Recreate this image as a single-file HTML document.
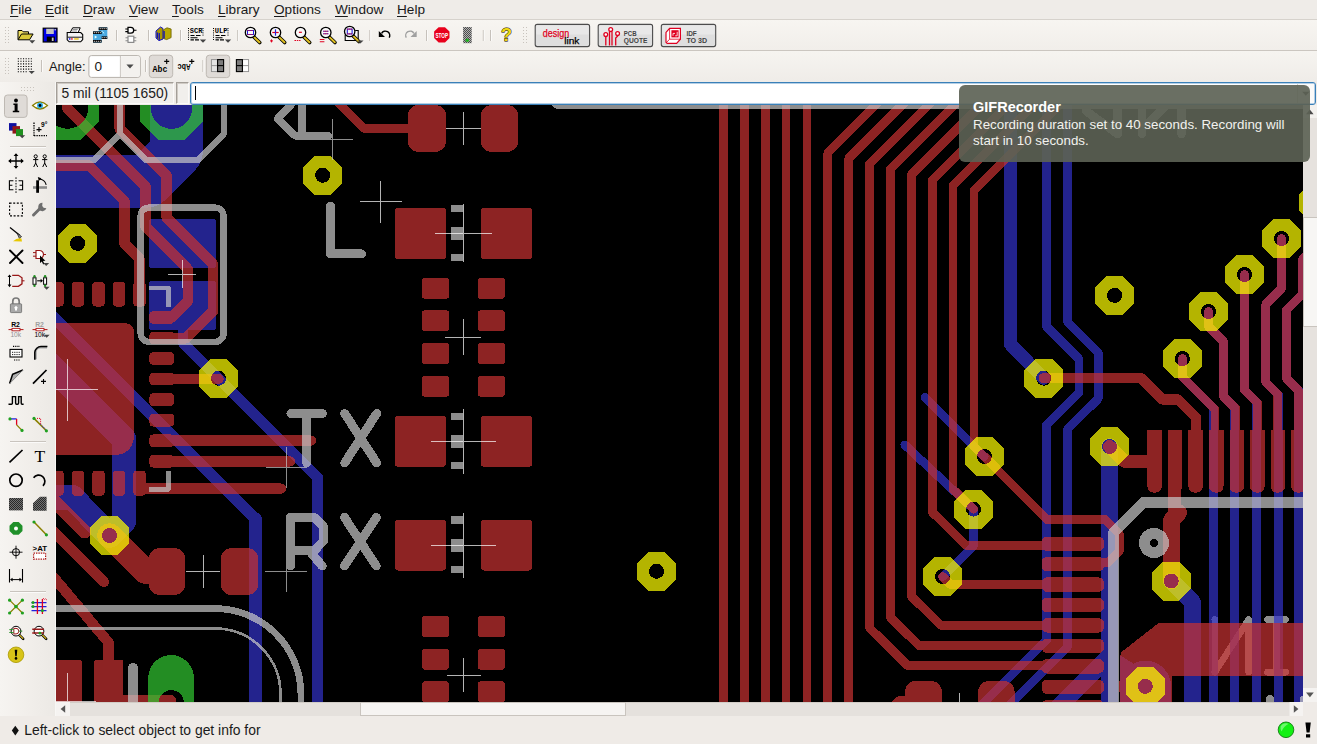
<!DOCTYPE html>
<html><head><meta charset="utf-8"><title>EAGLE</title>
<style>
*{box-sizing:border-box;margin:0;padding:0}
html,body{width:1317px;height:744px;overflow:hidden;background:#efebe7;font-family:"Liberation Sans",sans-serif;color:#1a1a1a}
#root{position:relative;width:1317px;height:744px;overflow:hidden;background:#efebe7}
.abs{position:absolute}
#menubar{left:0;top:0;width:1317px;height:20px;background:#efece8;border-bottom:1px solid #d6d2cc}
#menubar span{position:absolute;top:1px;font-size:13.6px;line-height:17px;white-space:nowrap;transform-origin:0 0}
#menubar u{text-decoration:underline;text-underline-offset:2px}
#tb1{left:0;top:20px;width:1317px;height:31px;background:linear-gradient(#f7f5f1,#f1eeea);border-bottom:1px solid #cbc6c0}
#tb2{left:0;top:51px;width:1317px;height:31px;background:linear-gradient(#f6f4f0,#efece8)}
#lefttb{left:0;top:82px;width:56px;height:634px;background:linear-gradient(90deg,#f6f4f1,#f1eeea 55%,#ece9e5);border-right:1px solid #f8f7f5}
#cvwrap{left:56px;top:105px;width:1247px;height:597px;background:#000;overflow:hidden}
#cvwrap svg{display:block}
#coord{left:56px;top:82px;width:118px;height:22px;border:1px solid #a39e98;border-right-color:#fbfaf9;border-bottom-color:#fbfaf9;box-shadow:inset 1px 1px 0 #cfcac4;background:#f1efec;font-size:13.85px;line-height:21px;padding-left:4.5px;white-space:nowrap}
#coord2{left:175.5px;top:82px;width:13.5px;height:22px;border:1px solid #a39e98;border-right-color:#fbfaf9;border-bottom-color:#fbfaf9;box-shadow:inset 1px 1px 0 #cfcac4;background:#f1efec}
#cmd{left:190px;top:82px;width:1126px;height:23px;border:1px solid #3a80b8;border-radius:3px;background:#fff;box-shadow:inset 0 0 0 1px #b4cfe6;z-index:3}
#cmdbtn{left:1297px;top:84px;width:17px;height:19px;border-left:1px solid #d8d4ce;background:#fbfaf9;z-index:3}
#caret{z-index:4}
#notif{z-index:5}
#caret{left:195px;top:86px;width:1px;height:14px;background:#000}
#vscroll{left:1303px;top:105px;width:14px;height:597px;background:#e6e2de}
#vthumb{left:1303px;top:217px;width:14px;height:110px;background:#f7f6f4;border:1px solid #c9c4be;border-right:none}
#hscroll{left:56px;top:702px;width:1247px;height:14px;background:#e5e1dd;border-top:1px solid #d2cdc7}
#hthumb{left:360px;top:702px;width:266px;height:14px;background:#f6f4f2;border:1px solid #c9c4be}
#hleft{left:56px;top:702px;width:14px;height:14px;background:#f3f1ee}
#status{left:0;top:716px;width:1317px;height:28px;background:#efebe7}
#status .t{position:absolute;left:24.3px;top:6px;font-size:13.9px;line-height:16px;white-space:nowrap;transform-origin:0 0}
#notif{left:959px;top:85px;width:351px;height:77px;border-radius:6px;background:rgba(92,97,84,0.915)}
#notif .h{position:absolute;left:14px;top:14px;font-weight:bold;color:#fff;font-size:14.5px;line-height:16px;white-space:nowrap;transform-origin:0 0}
#notif .b{position:absolute;left:14px;color:#f2f2ee;font-size:13.35px;line-height:16px;white-space:nowrap;transform-origin:0 0}
.sep{position:absolute;width:1px;background:#c9c4be;border-right:1px solid #fff;box-sizing:content-box}
.grip{position:absolute;width:3px;background-image:radial-gradient(circle,#c4bfb9 0.7px,transparent 0.9px);background-size:3px 3px}
.pressed{position:absolute;border:1px solid #b3aea8;border-radius:3px;background:#dcd8d3}
</style></head><body><div id="root">
<div id="menubar" class="abs">
<span style="left:10px"><u>F</u>ile</span><span style="left:45px"><u>E</u>dit</span><span style="left:83px"><u>D</u>raw</span><span style="left:129px"><u>V</u>iew</span><span style="left:172px"><u>T</u>ools</span><span style="left:218px"><u>L</u>ibrary</span><span style="left:274px"><u>O</u>ptions</span><span style="left:335px"><u>W</u>indow</span><span style="left:397px"><u>H</u>elp</span>
</div>
<div id="tb1" class="abs"></div>
<div id="tb2" class="abs"><!--TB2--></div>
<div id="lefttb" class="abs"><!--LEFT--></div>
<svg class="abs" style="left:0;top:0" width="1317" height="82" viewBox="0 0 1317 82"><defs><pattern id="chk" width="2" height="2" patternUnits="userSpaceOnUse"><rect width="2" height="2" fill="#fff"/><rect width="1" height="1" fill="#000"/><rect x="1" y="1" width="1" height="1" fill="#000"/></pattern><pattern id="chk2" width="2" height="2" patternUnits="userSpaceOnUse"><rect width="2" height="2" fill="#8a8a8a"/><rect width="1" height="1" fill="#111"/><rect x="1" y="1" width="1" height="1" fill="#111"/></pattern></defs><path d="M5.5,27v17M8.5,27v17" stroke="#c8c3bd" stroke-width="1" stroke-dasharray="1,2"/><g transform="translate(25.5,35)"><path d="M-7.5,4.5V-4.5h4l1.2,1.3h5.3V-1" fill="#f0e060" stroke="#000" stroke-width="1"/><path d="M-7.5,4.8L-4,-1H7.6L4,4.8Z" fill="#d8c838" stroke="#000" stroke-width="1"/><path d="M3.6,5.3h6.2l-3.1,3.2z" fill="#444"/></g><g transform="translate(50,35)"><rect x="-6.8" y="-6.8" width="13.8" height="13.8" fill="#0000e8" stroke="#000" stroke-width="1.2"/><rect x="-3.8" y="-6.2" width="7.6" height="5.2" fill="#c4c4c4"/><rect x="-3.2" y="1.6" width="8" height="5" fill="#000"/><rect x="1.8" y="2.6" width="1.8" height="3.4" fill="#c4c4c4"/><rect x="4.5" y="-6" width="1.4" height="1.4" fill="#c4c4c4"/></g><g transform="translate(74.7,35)"><path d="M-4.5,-2.5L-2,-7.2H5.5L3.5,-2.5Z" fill="#fff" stroke="#000" stroke-width="1"/><path d="M-7.5,-2.5H6L8,-0.5V4.5L6,6.8H-5.5L-7.5,4.8Z" fill="#f4f4f4" stroke="#000" stroke-width="1.1"/><path d="M-7,2.2H7.5" stroke="#000" stroke-width="0.9"/><rect x="-5.8" y="3.3" width="1.6" height="1.3" fill="#00f"/><rect x="-3.6" y="3.3" width="1.6" height="1.3" fill="#e00"/><rect x="-0.5" y="3.3" width="4.5" height="1.3" fill="#e8c000"/><path d="M-2,-5.5h5M-2.8,-4h5" stroke="#666" stroke-width="0.7"/></g><g transform="translate(100.2,35)"><rect x="-1.5" y="-7.6" width="8.6" height="11" fill="#48a8e0"/><rect x="-1.5" y="-7.6" width="8.6" height="2.6" fill="#000"/><rect x="-1.5" y="1.4" width="8.6" height="2.6" fill="#000"/><path d="M-0.5,-6.3h7M-0.5,2.7h7" stroke="#fff" stroke-width="1" stroke-dasharray="1,1"/><rect x="-7.2" y="-3.6" width="8.6" height="11.2" fill="#48a8e0"/><rect x="-7.2" y="-3.6" width="8.6" height="2.6" fill="#000"/><rect x="-7.2" y="5" width="8.6" height="2.6" fill="#000"/><path d="M-6.4,-2.3h7M-6.4,6.3h7" stroke="#fff" stroke-width="1" stroke-dasharray="1,1"/><path d="M-5.5,0.5l2.5,1.6l-2.5,1.6z" fill="#dff"/><path d="M1.5,-4l3,3" stroke="#dff" stroke-width="1.2" stroke-dasharray="1,1"/></g><path d="M116.5,30v11" stroke="#c6c1bb" stroke-width="1"/><path d="M117.5,30v11" stroke="#fbfaf9" stroke-width="1"/><g transform="translate(130.8,35)"><path d="M-2.8,-7.6H0A2.9,2.9 0 0 1 0,-1.8H-2.8Z" fill="#fff" stroke="#000" stroke-width="1.3"/><path d="M-5.5,-6h2.7M-5.5,-3.4h2.7M2.9,-4.7h2.8" stroke="#000" stroke-width="1.1"/><rect x="-2.8" y="1.2" width="5.8" height="6.2" fill="#fff" stroke="#8a8a8a" stroke-width="1.2"/><path d="M-5.3,2.8h2.5M-5.3,5.8h2.5M3,2.8h2.5M3,5.8h2.5" stroke="#8a8a8a" stroke-width="1.1"/></g><path d="M148.5,30v11" stroke="#c6c1bb" stroke-width="1"/><path d="M149.5,30v11" stroke="#fbfaf9" stroke-width="1"/><g transform="translate(163.5,34)"><path d="M-7.5,-3L-3,-7L-0.5,-5.5V5L-4.5,6.6L-7.5,4Z" fill="#a89800" stroke="#1010c0" stroke-width="1"/><path d="M-6,-1.5V4.5M-4.2,-1V5.8" stroke="#1010c0" stroke-width="1.2"/><path d="M0,-4.2L3.5,-6.2L7.6,-5V3.6L3.2,5.6L0,4.6Z" fill="#b8a800" stroke="#6a6000" stroke-width="0.8"/><path d="M0.6,-3V4.6" stroke="#1010c0" stroke-width="1.3"/></g><path d="M180.5,30v11" stroke="#c6c1bb" stroke-width="1"/><path d="M181.5,30v11" stroke="#fbfaf9" stroke-width="1"/><g transform="translate(196,34.5)"><path d="M-7.5,-6.5V6M7,-6.5V2" stroke="#000" stroke-width="1" stroke-dasharray="1,1.2"/><text x="-6.2" y="-1.4" font-family="Liberation Mono" font-weight="bold" font-size="7.4" textLength="12.6" lengthAdjust="spacingAndGlyphs" fill="#000">SCR</text><path d="M-5.5,1h4M0,1h4.5M-5.5,3.2h7M-5.5,5.4h3.4M-1,5.4h4" stroke="#000" stroke-width="1.1"/><path d="M3.8,4.9h6.4l-3.2,3.3z" fill="#444"/></g><g transform="translate(221,34.5)"><path d="M-7.5,-6.5V6M7,-6.5V2" stroke="#000" stroke-width="1" stroke-dasharray="1,1.2"/><text x="-6.2" y="-1.4" font-family="Liberation Mono" font-weight="bold" font-size="7.4" textLength="12.6" lengthAdjust="spacingAndGlyphs" fill="#000">ULP</text><path d="M-5.5,1h4M0,1h4.5M-5.5,3.2h7M-5.5,5.4h3.4M-1,5.4h4" stroke="#000" stroke-width="1.1"/><path d="M3.8,4.9h6.4l-3.2,3.3z" fill="#444"/></g><path d="M237.7,30v11" stroke="#c6c1bb" stroke-width="1"/><path d="M238.7,30v11" stroke="#fbfaf9" stroke-width="1"/><g transform="translate(250.5,33.5)"><path d="M3.2,3.2L9.2,9" stroke="#000" stroke-width="3.6" stroke-linecap="round"/><path d="M3.6,3.6L9,8.8" stroke="#e0c020" stroke-width="2" stroke-linecap="round"/><circle cx="0" cy="-1" r="5.2" fill="#f8f8f8" stroke="#000" stroke-width="1.3"/><rect x="-3" y="-3" width="6" height="4" fill="none" stroke="#2020e0" stroke-width="1"/><path d="M-3,-3h6M-3,1h6" stroke="#e00020" stroke-width="1" stroke-dasharray="1,1"/></g><g transform="translate(275.5,33.5)"><path d="M3.2,3.2L9.2,9" stroke="#000" stroke-width="3.6" stroke-linecap="round"/><path d="M3.6,3.6L9,8.8" stroke="#e0c020" stroke-width="2" stroke-linecap="round"/><circle cx="0" cy="-1" r="5.2" fill="#f8f8f8" stroke="#000" stroke-width="1.3"/><path d="M-3.2,-1h6.4" stroke="#e00020" stroke-width="1.2"/><path d="M0,-4.2v6.4" stroke="#2020e0" stroke-width="1.2"/><path d="M-5.5,7.4h3M-4,5.9v3" stroke="#e00020" stroke-width="1"/></g><g transform="translate(300.5,33.5)"><path d="M3.2,3.2L9.2,9" stroke="#000" stroke-width="3.6" stroke-linecap="round"/><path d="M3.6,3.6L9,8.8" stroke="#e0c020" stroke-width="2" stroke-linecap="round"/><circle cx="0" cy="-1" r="5.2" fill="#f8f8f8" stroke="#000" stroke-width="1.3"/><path d="M-1.6,-1.2h3" stroke="#e00020" stroke-width="1.2"/><path d="M-6,7h6" stroke="#e00020" stroke-width="1.1" stroke-dasharray="1.5,0.8"/></g><g transform="translate(325.8,33.5)"><path d="M3.2,3.2L9.2,9" stroke="#000" stroke-width="3.6" stroke-linecap="round"/><path d="M3.6,3.6L9,8.8" stroke="#e0c020" stroke-width="2" stroke-linecap="round"/><circle cx="0" cy="-1" r="5.2" fill="#f8f8f8" stroke="#000" stroke-width="1.3"/><path d="M-2.5,-2.3h5M-2.5,0.2h5" stroke="#e00020" stroke-width="1.1"/><path d="M-2.5,-2.3h5M-2.5,0.2h5" stroke="#2020e0" stroke-width="1.1" stroke-dasharray="1,1"/><path d="M-6,6h4.6M-6,8.2h4.6" stroke="#e00020" stroke-width="1.1"/></g><g transform="translate(350.7,33.5)"><path d="M-5.5,1.5V7H7.5V-3H4.5" fill="#f8f8f8" stroke="#000" stroke-width="1.1"/></g><g transform="translate(349.7,32.5)"><path d="M3.2,3.2L9.2,9" stroke="#000" stroke-width="3.6" stroke-linecap="round"/><path d="M3.6,3.6L9,8.8" stroke="#e0c020" stroke-width="2" stroke-linecap="round"/><circle cx="0" cy="-1" r="5.2" fill="#f8f8f8" stroke="#000" stroke-width="1.3"/><rect x="-2.4" y="-3.4" width="4.8" height="4.8" fill="none" stroke="#2020e0" stroke-width="1.1"/><path d="M-2.4,-3.4h4.8M-2.4,1.4h4.8" stroke="#e00020" stroke-width="1.1" stroke-dasharray="1,1"/><path d="M7.6,7.9h6.2l-3.1,3.2z" fill="#444"/></g><path d="M369.8,30v11" stroke="#c6c1bb" stroke-width="1"/><path d="M370.8,30v11" stroke="#fbfaf9" stroke-width="1"/><g transform="translate(385,34.5)"><path d="M4.2,3.2A4.3,4.3 0 1 0 -3.4,-1.2" fill="none" stroke="#000" stroke-width="1.4"/><path d="M-6.2,-3.6V2.6H0Z" fill="#000"/></g><g transform="translate(410.5,34.5)"><path d="M-4.2,3.2A4.3,4.3 0 1 1 3.4,-1.2" fill="none" stroke="#a0a0a0" stroke-width="1.4"/><path d="M6.2,-3.6V2.6H0Z" fill="#a0a0a0"/></g><path d="M426.5,30v11" stroke="#c6c1bb" stroke-width="1"/><path d="M427.5,30v11" stroke="#fbfaf9" stroke-width="1"/><g transform="translate(441.8,34.8)"><polygon points="7.67,3.18 3.18,7.67 -3.18,7.67 -7.67,3.18 -7.67,-3.18 -3.18,-7.67 3.18,-7.67 7.67,-3.18" fill="#e8001c"/><text x="-6.4" y="2.7" font-family="Liberation Sans" font-weight="bold" font-size="7.6" textLength="12.8" lengthAdjust="spacingAndGlyphs" fill="#fff">STOP</text></g><g transform="translate(467.3,35)"><rect x="-4.2" y="-8" width="8.6" height="16.2" fill="url(#chk)"/><circle cx="0" cy="5.2" r="1.8" fill="#20b020"/></g><path d="M483.3,30v11" stroke="#c6c1bb" stroke-width="1"/><path d="M484.3,30v11" stroke="#fbfaf9" stroke-width="1"/><path d="M490.5,30v11" stroke="#c6c1bb" stroke-width="1"/><path d="M491.5,30v11" stroke="#fbfaf9" stroke-width="1"/><g transform="translate(506,35)"><text x="-5" y="6.4" font-family="Liberation Sans" font-weight="bold" font-size="18" fill="#f0d810" stroke="#000" stroke-width="0.9" paint-order="stroke">?</text></g><path d="M523.5,27v17M526.5,27v17" stroke="#c8c3bd" stroke-width="1" stroke-dasharray="1,2"/><rect x="535.2" y="24.4" width="54.4" height="22.2" rx="2" fill="#dedede" stroke="#4c4c4c" stroke-width="1.1"/><rect x="536.2" y="25.4" width="52.4" height="9" rx="1" fill="#e8e8e8"/><rect x="598.2" y="24.4" width="54.4" height="22.2" rx="2" fill="#dedede" stroke="#4c4c4c" stroke-width="1.1"/><rect x="599.2" y="25.4" width="52.4" height="9" rx="1" fill="#e8e8e8"/><rect x="661.3" y="24.4" width="54.4" height="22.2" rx="2" fill="#dedede" stroke="#4c4c4c" stroke-width="1.1"/><rect x="662.3" y="25.4" width="52.4" height="9" rx="1" fill="#e8e8e8"/><text x="542.8" y="37.2" font-family="Liberation Sans" font-size="10.5" textLength="26.4" lengthAdjust="spacingAndGlyphs" fill="#e00020" stroke="#e00020" stroke-width="0.25">design</text><text x="564.2" y="44.2" font-family="Liberation Sans" font-size="9.6" textLength="15.2" lengthAdjust="spacingAndGlyphs" fill="#000" stroke="#000" stroke-width="0.25">link</text><g stroke="#e00020" stroke-width="1.3" fill="#fff"><path d="M605.8,45.5V36.5M609.5,45.5V31.5M612,45.5V31.5M615.7,45.5V38L617.5,36.2V35.5" fill="none"/><circle cx="605.8" cy="34.6" r="1.9"/><circle cx="610.7" cy="29.6" r="1.9"/><circle cx="617.6" cy="33.6" r="1.9"/></g><text x="623.8" y="36.2" font-family="Liberation Sans" font-weight="bold" font-size="6.6" textLength="12.8" lengthAdjust="spacingAndGlyphs" fill="#444">PCB</text><text x="623.8" y="43" font-family="Liberation Sans" font-weight="bold" font-size="6.6" textLength="23.6" lengthAdjust="spacingAndGlyphs" fill="#444">QUOTE</text><g stroke="#e00020" stroke-width="1.2" fill="none"><path d="M666,42.2V32.4L669.6,28.4H680.4V39.2L676.6,43.4H667.2Z" fill="#fff"/><path d="M669.6,28.4V39.2H680.4M669.6,39.2L666.4,42.6" stroke-width="0.8"/><rect x="671.4" y="30.2" width="7.2" height="7.2" fill="#e00020" stroke="none"/><path d="M673,35.8v-2.4h2M675.2,35.8h2v-4" stroke="#fff" stroke-width="0.8"/></g><text x="686.4" y="36.2" font-family="Liberation Sans" font-weight="bold" font-size="6.6" textLength="10.4" lengthAdjust="spacingAndGlyphs" fill="#444">IDF</text><text x="686.4" y="43" font-family="Liberation Sans" font-weight="bold" font-size="6.6" textLength="20.8" lengthAdjust="spacingAndGlyphs" fill="#444">TO 3D</text><path d="M5.5,58v17M8.5,58v17" stroke="#c8c3bd" stroke-width="1" stroke-dasharray="1,2"/><g transform="translate(25,65.5)"><path d="M-7.2,-6.8h14M-7.2,-4.2h14M-7.2,-1.6h14M-7.2,1h14M-7.2,3.6h14M-7.2,6.2h9" stroke="#000" stroke-width="1.1" stroke-dasharray="1.1,1.5"/><path d="M3.6,5.4h6.2l-3.1,3.2z" fill="#444"/></g><path d="M41.5,60v12" stroke="#c6c1bb" stroke-width="1"/><path d="M42.5,60v12" stroke="#fbfaf9" stroke-width="1"/><text x="49" y="71.4" font-family="Liberation Sans" font-size="13.6" textLength="36.6" lengthAdjust="spacingAndGlyphs" fill="#1a1a1a">Angle:</text><rect x="88.9" y="55.6" width="51.4" height="21.8" rx="2.5" fill="#fff" stroke="#b6b1ab" stroke-width="1"/><path d="M120.4,56v21" stroke="#c8c3bd" stroke-width="1"/><rect x="120.9" y="56.2" width="18.9" height="20.6" rx="2" fill="#f3f1ee"/><text x="94.5" y="71.4" font-family="Liberation Sans" font-size="13.6" fill="#1a1a1a">0</text><path d="M126.4,64.4h7.2l-3.6,4z" fill="#4a4a4a"/><path d="M145.5,60v12" stroke="#c6c1bb" stroke-width="1"/><path d="M146.5,60v12" stroke="#fbfaf9" stroke-width="1"/><rect x="149.3" y="55.2" width="23.4" height="22.4" rx="3" fill="#dfdbd7" stroke="#beb9b3" stroke-width="1"/><text x="152.6" y="72" font-family="Liberation Mono" font-weight="bold" font-size="9.6" textLength="14.8" lengthAdjust="spacingAndGlyphs" fill="#000">Abc</text><path d="M164.2,61.4h5M166.7,58.9v5" stroke="#000" stroke-width="1.1"/><text transform="translate(190.4,63.6) rotate(180)" font-family="Liberation Mono" font-weight="bold" font-size="9.6" textLength="13" lengthAdjust="spacingAndGlyphs" fill="#000">Abc</text><path d="M189.3,61.4h5M191.8,58.9v5" stroke="#000" stroke-width="1.1"/><path d="M202.9,60v12" stroke="#c6c1bb" stroke-width="1"/><path d="M203.9,60v12" stroke="#fbfaf9" stroke-width="1"/><rect x="206.3" y="55.2" width="23.4" height="22.4" rx="3" fill="#dfdbd7" stroke="#beb9b3" stroke-width="1"/><g><rect x="211.4" y="59.6" width="6" height="12" fill="#e4e4e4" stroke="#8c8c8c" stroke-width="0.9"/><path d="M211.4,65.6h6" stroke="#8c8c8c" stroke-width="0.9"/><rect x="217.6" y="59.6" width="6" height="12" fill="#7c7c7c" stroke="#000" stroke-width="1.1"/><path d="M217.6,65.6h6" stroke="#000" stroke-width="1.1"/></g><g><rect x="242.6" y="59.6" width="6" height="12" fill="#fff" stroke="#8c8c8c" stroke-width="0.9"/><path d="M242.6,65.6h6" stroke="#8c8c8c" stroke-width="0.9"/><rect x="236.4" y="59.6" width="6" height="12" fill="#7c7c7c" stroke="#000" stroke-width="1.1"/><path d="M236.4,65.6h6" stroke="#000" stroke-width="1.1"/></g></svg><svg class="abs" style="left:0;top:0" width="56" height="744" viewBox="0 0 56 744"><path d="M21,87.5h15M21,90.5h15" stroke="#c8c3bd" stroke-width="1" stroke-dasharray="1,2"/><rect x="4.5" y="95" width="22.6" height="22.4" rx="3" fill="#dfdbd7" stroke="#beb9b3"/><g transform="translate(16,105.5)"><circle cx="0" cy="-5" r="1.9" fill="#000"/><path d="M-2.6,-2h4.2v7.2h1.6v1.6h-6.4v-1.6h1.8v-5.6h-1.2z" fill="#000"/></g><g transform="translate(40,105.5)"><path d="M-7.5,0Q0,-7 7.5,0Q0,7 -7.5,0Z" fill="#fff" stroke="#8a8000" stroke-width="1.2"/><circle r="3" fill="#30b0e8"/><circle r="1.4" fill="#000"/></g><g transform="translate(16,129.6)"><rect x="-7" y="-6.5" width="7.5" height="7.5" fill="#1010a0"/><rect x="-3.5" y="-3.5" width="7.5" height="7.5" fill="#901818"/><rect x="0" y="-0.5" width="7" height="7" fill="#209020"/><path d="M3.2,5.6h6l-3,3.1z" fill="#444"/></g><g transform="translate(40,129.6)"><path d="M-6,-7V6.5M-6,6h13" stroke="#000" stroke-width="1.3" stroke-dasharray="1.4,1"/><path d="M-3.5,0h5M-1,-2.5v5" stroke="#000" stroke-width="1.1"/><text x="1" y="-2.2" font-family="Liberation Sans" font-weight="bold" font-size="6.6" fill="#000">9°</text></g><path d="M10,146.5h36" stroke="#c9c4be"/><path d="M10,147.5h36" stroke="#fbfaf9"/><g transform="translate(16,161)"><g transform="scale(0.92)"><path d="M0,-7.5V7.5M-7.5,0H7.5" stroke="#000" stroke-width="1.4"/><path d="M0,-8.5l-2.6,3.2h5.2zM0,8.5l-2.6,-3.2h5.2zM-8.5,0l3.2,-2.6v5.2zM8.5,0l-3.2,-2.6v5.2z" fill="#000"/></g></g><g transform="translate(35.7,161)"><circle cx="0" cy="-4.6" r="1.6" fill="none" stroke="#000" stroke-width="1"/><path d="M0,-3V2M-2.6,-1.4h5.2M0,2L-2,6M0,2L2,6" stroke="#000" stroke-width="1" fill="none"/></g><g transform="translate(44.7,161)"><circle cx="0" cy="-4.6" r="1.6" fill="none" stroke="#000" stroke-width="1"/><path d="M0,-3V2M-2.6,-1.4h5.2M0,2L-2,6M0,2L2,6" stroke="#000" stroke-width="1" fill="none"/></g><g transform="translate(16,185.3)"><path d="M0,-8V8" stroke="#000" stroke-width="1" stroke-dasharray="1.6,1.2"/><path d="M-2.6,-4.5H-6.6V4.5H-2.6M-6.6,0H-3.6M2.6,-4.5H6.6V4.5H2.6M6.6,0H3.6" stroke="#000" stroke-width="1.1" fill="none"/></g><g transform="translate(40,185.3)"><path d="M-7,2.2H7" stroke="#8a8a8a" stroke-width="2.6"/><path d="M-2.4,-5V7.5" stroke="#000" stroke-width="2.8"/><path d="M-1,-6.2A7,7 0 0 1 6.2,-0.5" fill="none" stroke="#000" stroke-width="1.1"/><path d="M-2.2,-8.2l3.6,1.2l-2.6,2.6z" fill="#000"/></g><g transform="translate(16,209.5)"><rect x="-6.4" y="-6.4" width="12.8" height="12.8" fill="none" stroke="#000" stroke-width="1.1" stroke-dasharray="2,1.6"/></g><g transform="translate(40,209.5)"><path d="M-6.5,5.5L1,-2" stroke="#6e6e6e" stroke-width="3" stroke-linecap="round"/><path d="M2.5,-6.8A4.2,4.2 0 1 0 6.4,-1.2L3.6,-1.8L2.2,-3.6Z" fill="#6e6e6e"/></g><g transform="translate(16,235)"><path d="M-6,-7.5L4,0.5" stroke="#000" stroke-width="1.3"/><path d="M1,-2L5.6,1.6L3.4,3.6Z" fill="#888" stroke="#000" stroke-width="0.6"/><path d="M-3,6.2Q1,2.6 5.4,3.4L6,6.4Z" fill="#e8c800"/></g><g transform="translate(16,257)"><path d="M-6,-6.5L6.5,6M6.5,-6.5L-6,6" stroke="#000" stroke-width="1.9" stroke-linecap="round"/></g><g transform="translate(40,257)"><path d="M-4,-6.5H-0.5A4,4 0 0 1 -0.5,1.5H-4Z" fill="#fff" stroke="#981818" stroke-width="1.2"/><path d="M-7,-4.4h3M-7,-0.8h3M3.4,-2.5h2.6" stroke="#981818" stroke-width="1"/><path d="M0,-1.5V6L1.8,4.4L3.2,7.4L4.4,6.8L3,4L5.4,3.8Z" fill="#000"/><path d="M3.2,6h6l-3,3z" fill="#444"/></g><g transform="translate(16,280.8)"><path d="M-6.5,-4.5V4.5" stroke="#000" stroke-width="1"/><path d="M-6.5,-6.4l-1.9,2.6h3.8zM-6.5,6.4l-1.9,-2.6h3.8z" fill="#000"/><path d="M-3.8,-5.5H2.4L6,-3V3L2.4,5.5H-3.8" fill="none" stroke="#981818" stroke-width="1.3"/><path d="M6,0h2.5" stroke="#981818" stroke-width="1.1"/></g><g transform="translate(40,280.8)"><rect x="-7" y="-3" width="3" height="6.5" fill="#fff" stroke="#000" stroke-width="1"/><rect x="3.6" y="-3" width="3" height="6.5" fill="#fff" stroke="#000" stroke-width="1"/><circle cx="-5.5" cy="-4.6" r="1.2" fill="#209020"/><circle cx="5.1" cy="-4.6" r="1.2" fill="#209020"/><circle cx="-5.5" cy="5" r="1.2" fill="#209020"/><circle cx="5.1" cy="5" r="1.2" fill="#209020"/><path d="M-2.8,0h4.4" stroke="#000" stroke-width="1.1"/><path d="M3,0l-2.4,-2v4z" fill="#000"/><path d="M3.6,6h6l-3,3z" fill="#444"/></g><g transform="translate(16,305.4)"><path d="M-3.2,-1.5V-4.2A3.2,3.2 0 0 1 3.2,-4.2V-1.5" fill="none" stroke="#7a7a7a" stroke-width="1.7"/><rect x="-5.6" y="-1.6" width="11.2" height="8.8" rx="0.8" fill="#a8a8a8" stroke="#6a6a6a" stroke-width="0.8"/><path d="M0,0.4l-2.2,2.4h1.2v2.4h2v-2.4h1.2z" fill="#fff"/></g><g transform="translate(16,329)"><text x="-4.8" y="-1.6" font-family="Liberation Sans" font-weight="bold" font-size="6.8" fill="#000">R2</text><path d="M-7.5,0.6h15" stroke="#b01818" stroke-width="1"/><rect x="-4" y="-0.6" width="8" height="2.4" fill="#fff" stroke="#b01818" stroke-width="0.9"/><text x="-5.6" y="7.6" font-family="Liberation Sans" font-size="6.6" fill="#909090">10k</text></g><g transform="translate(40,329)"><text x="-4.8" y="-1.6" font-family="Liberation Sans" font-weight="bold" font-size="6.8" fill="#a0a0a0">R2</text><path d="M-7.5,0.6h15" stroke="#b01818" stroke-width="1"/><rect x="-4" y="-0.6" width="8" height="2.4" fill="#fff" stroke="#b01818" stroke-width="0.9"/><text x="-5.6" y="7.6" font-family="Liberation Sans" font-size="6.6" fill="#000">10k</text></g><path d="M43.6,334.8h6l-3,3z" fill="#444"/><g transform="translate(16,352.8)"><rect x="-6" y="-3.4" width="12" height="7.6" fill="#fff" stroke="#000" stroke-width="1.1"/><path d="M-4,-0.5h8M-4,1.8h8" stroke="#000" stroke-width="0.9" stroke-dasharray="1,0.8"/><path d="M-3,-6.4h7M-2,7.2h6" stroke="#000" stroke-width="1.1" stroke-dasharray="1.2,1"/></g><g transform="translate(40,352.8)"><path d="M-5.5,6.5V-1A5.5,5.5 0 0 1 0,-6.4H7V-4.4H0.5A3.6,3.6 0 0 0 -3.2,-0.8V6.5Z" fill="#a8a8a8"/><path d="M-5.2,7V-0.6A6.2,6.2 0 0 1 1,-6.2H7.4" fill="none" stroke="#000" stroke-width="1.5"/></g><g transform="translate(16,376.8)"><path d="M-6.4,6.4L-3,-3L6.8,-6.8" fill="#b0b0b0" stroke="none"/><path d="M-6.4,6.8L-3.4,-2.6L7,-6.8" fill="none" stroke="#000" stroke-width="1.5"/><path d="M-6.4,6.8L7,-6.8" stroke="#808080" stroke-width="0.9"/></g><g transform="translate(40,376.8)"><path d="M-7,6.8L6.5,-6.8" stroke="#000" stroke-width="1.7"/><path d="M1,4.6h5M3.5,2.1v5" stroke="#000" stroke-width="1.1"/></g><g transform="translate(16,401)"><path d="M-7.5,3.2H-4.6Q-3.6,3.2 -3.6,2V-4.4H-0.4V2Q-0.4,3.2 0.6,3.2H1.4Q2.6,3.2 2.6,2V-4.4H5.2V2Q5.2,3.2 6.2,3.2H7.6" fill="none" stroke="#000" stroke-width="1.4"/></g><g transform="translate(16,424.4)"><path d="M-6,-5.5H0.6" stroke="#2020e0" stroke-width="1.3"/><path d="M0.6,-5.5V0.5" stroke="#e00020" stroke-width="1.3"/><path d="M0.6,0.5L6,6" stroke="#8a8000" stroke-width="1.3"/><circle cx="-6" cy="-5.5" r="1.6" fill="#20a020"/><circle cx="6" cy="6" r="1.6" fill="#20a020"/></g><g transform="translate(40,424.4)"><path d="M-6,-6L6.4,6.4" stroke="#8a8000" stroke-width="1.6"/><path d="M-3,-6h3.6v6" fill="none" stroke="#e00020" stroke-width="1" stroke-dasharray="1,1"/><path d="M0.6,0L5.6,5" stroke="#2020e0" stroke-width="1" stroke-dasharray="1,1"/><circle cx="-6" cy="-6" r="1.6" fill="#20a020"/><circle cx="6.4" cy="6.4" r="1.6" fill="#20a020"/></g><path d="M10,441.5h36" stroke="#c9c4be"/><path d="M10,442.5h36" stroke="#fbfaf9"/><g transform="translate(16,456.2)"><path d="M-6.5,6.2L6.5,-6.2" stroke="#000" stroke-width="1.7"/></g><g transform="translate(40,456.2)"><text x="-5.6" y="6.2" font-family="Liberation Serif" font-size="17.5" fill="#000">T</text></g><g transform="translate(16,480.2)"><circle r="6.2" fill="none" stroke="#000" stroke-width="1.7"/></g><g transform="translate(40,480.2)"><path d="M-6.4,-2.4A6.2,6.2 0 1 1 3,5.6" fill="none" stroke="#000" stroke-width="1.7"/></g><g transform="translate(16,504.2)"><rect x="-7" y="-6.2" width="14" height="12.4" fill="url(#chk2)"/></g><g transform="translate(40,504.2)"><path d="M-7,6.6V-1L0,-7.4H6.6V6.6Z" fill="url(#chk2)"/></g><g transform="translate(16,528.4)"><polygon points="6.47,2.68 2.68,6.47 -2.68,6.47 -6.47,2.68 -6.47,-2.68 -2.68,-6.47 2.68,-6.47 6.47,-2.68" fill="#20902a"/><circle r="2" fill="#fff"/></g><g transform="translate(40,528.4)"><path d="M-6,-6.4L6.4,6.4" stroke="#8a8000" stroke-width="1.5"/><circle cx="-6" cy="-6.4" r="1.6" fill="#20a020"/><circle cx="6.4" cy="6.4" r="1.6" fill="#20a020"/></g><g transform="translate(16,552.2)"><circle r="3.6" fill="none" stroke="#000" stroke-width="1"/><path d="M-6.5,0h13M0,-6.5v13" stroke="#000" stroke-width="0.9"/></g><g transform="translate(40,552.2)"><text x="-7.4" y="-1" font-family="Liberation Sans" font-weight="bold" font-size="7" textLength="14.4" lengthAdjust="spacingAndGlyphs" fill="#000">&gt;AT</text><rect x="-6.4" y="1" width="12" height="6" fill="#fff" stroke="#b01818" stroke-width="1.2" stroke-dasharray="1.4,1"/></g><g transform="translate(16,576)"><path d="M-6.5,-7V6.5M6.5,-7V6.5" stroke="#000" stroke-width="1.1"/><path d="M-5,3.6H5" stroke="#000" stroke-width="1"/><path d="M-6,3.6l2.6,-1.8v3.6zM6,3.6l-2.6,-1.8v3.6z" fill="#000"/></g><path d="M10,591.5h36" stroke="#c9c4be"/><path d="M10,592.5h36" stroke="#fbfaf9"/><g transform="translate(16,606.6)"><path d="M-6.4,-6.4L6.4,6.4M6.4,-6.4L-6.4,6.4" stroke="#8a8000" stroke-width="1.2"/><circle cx="-6.4" cy="-6.4" r="1.6" fill="#20a020"/><circle cx="6.4" cy="-6.4" r="1.6" fill="#20a020"/><circle cx="-6.4" cy="6.4" r="1.6" fill="#20a020"/><circle cx="6.4" cy="6.4" r="1.6" fill="#20a020"/><circle r="1.8" fill="#20a020"/></g><g transform="translate(39,606.6)"><path d="M-7.5,-4h15M-7.5,0h15M-7.5,4h15" stroke="#2020e0" stroke-width="1.3"/><path d="M-1.6,-7.5v15M3.4,-7.5v15" stroke="#e00020" stroke-width="1.3"/><circle cx="-6" cy="-4" r="1.5" fill="#20a020"/><circle cx="-6" cy="0" r="1.5" fill="#20a020"/><circle cx="3.4" cy="4" r="1.5" fill="#20a020"/><path d="M4,-8.5l1.6,1.6M6.4,-8l1.4,1.4" stroke="#e00020" stroke-width="0.9"/></g><g transform="translate(16,631.6)"><g transform="scale(0.9)"><path d="M3.6,3.6L8,8" stroke="#000" stroke-width="2.8" stroke-linecap="round"/><path d="M4,4L7.6,7.6" stroke="#e0c020" stroke-width="1.3" stroke-linecap="round"/><circle cx="0" cy="-0.5" r="5.4" fill="#fff" stroke="#000" stroke-width="1.1"/><path d="M-2.4,-3.6H0A3,3 0 0 1 0,2.6H-2.4Z" fill="#fff" stroke="#981818" stroke-width="1.1"/><path d="M-7.5,-2.2h5M-7.5,1h5M3,-0.5h4" stroke="#209020" stroke-width="1"/></g></g><g transform="translate(39,631.6)"><g transform="scale(0.9)"><path d="M3.6,3.6L8,8" stroke="#000" stroke-width="2.8" stroke-linecap="round"/><path d="M4,4L7.6,7.6" stroke="#e0c020" stroke-width="1.3" stroke-linecap="round"/><circle cx="0" cy="-0.5" r="5.4" fill="#fff" stroke="#000" stroke-width="1.1"/><path d="M-7.5,-2.6h13M-7.5,1.6h13" stroke="#981818" stroke-width="1.7"/><circle cx="1" cy="1.8" r="1.5" fill="#20a020"/></g></g><g transform="translate(16,654.8)"><circle r="7.8" fill="#d8c418" stroke="#a89800" stroke-width="0.8"/><path d="M-1.3,-5h2.6L0.7,1.4H-0.7Z" fill="#000"/><circle cx="0" cy="3.6" r="1.3" fill="#000"/></g></svg>
<div id="coord" class="abs">5 mil (1105 1650)</div>
<div id="coord2" class="abs"></div>
<div id="cmd" class="abs"></div><div id="cmdbtn" class="abs"></div><div id="caret" class="abs"></div>
<div id="cvwrap" class="abs"><svg id="cv" width="1247" height="597" viewBox="56 105 1247 597" shape-rendering="crispEdges">
<rect x="56" y="104" width="1247" height="598" fill="#000"/>
<g opacity="0.706" fill="none" stroke="#c8c8c8" stroke-linecap="round" stroke-linejoin="round"><path d="M1214.8,672.2V619.5M1248.7,672.2V619.5M1214.8,672.2L1248.7,619.5M1276.6,619.5V672.2M1267.5,619.5H1285.6M1267.5,672.2H1285.6" stroke-width="6.6" /></g>
<g opacity="0.706" fill="none" stroke="#3232c8" stroke-linecap="round" stroke-linejoin="round"><path d="M40,181.4H146.8L176.6,151.6V90" stroke-width="52.4" />
<g stroke="none" fill="#3232c8"><rect x="149.2" y="219.1" width="66.8" height="48.8" rx="2.5"/><rect x="149.2" y="280.9" width="66.8" height="49.3" rx="2.5"/></g>
<path d="M182.9,326V342.7L317.7,477.5V710" stroke-width="10.6" />
<path d="M40,303.4L255.3,518.7" stroke-width="10.8" />
<path d="M255.3,518.7V710" stroke-width="13" />
<path d="M30,345.1L124,439.1V521L109.5,535.6" stroke-width="24.6" />
<path d="M40,497.2H72L109.5,535.6" stroke-width="24.6" />
<path d="M1010.7,90V344.7L1043.7,378.2" stroke-width="13.1" />
<path d="M1046.6,90V326.6L1078.8,358.8V392.8L1046.5,425V640.2L976,710.6" stroke-width="8.6" />
<path d="M1067.5,90V321.7L1098.2,352.4V398.8L1067.5,429.3V647L1002,712.5" stroke-width="8.6" />
<path d="M925.1,397.5L984.4,456.5" stroke-width="8.6" />
<path d="M904.7,444.8L973.5,509.2V545.7L942.6,576.6" stroke-width="8.6" />
<path d="M1182.4,358.6V377L1213.6,408.2V710" stroke-width="8.8" />
<path d="M1208.6,311.5V326.5L1223.5,341.4V396.4L1234.5,407.4V710" stroke-width="8.8" />
<path d="M1244.5,274.6V390L1256.6,402.1V710" stroke-width="8.8" />
<path d="M1281.6,238.5V288.5L1265.8,304.3V382.5L1278.5,395.2V710" stroke-width="8.8" />
<path d="M1318.5,202.3V243L1302.7,258.8V294L1286.5,310.2V378.4L1298.7,390.6V710" stroke-width="8.8" />
<path d="M1109.6,446.5V710" stroke-width="16.6" />
<path d="M1109.6,656L1040,725.6" stroke-width="16.6" />
<path d="M1171.3,581L1192.4,602.1V710" stroke-width="17" />
<path d="M1145.3,686.4V730" stroke-width="51.6" />
<path stroke="none" fill="#3232c8" d="M1119.5,655L1134,664L1119.5,690Z"/></g>
<g opacity="0.706" fill="none" stroke="#c83232" stroke-linecap="round" stroke-linejoin="round"><path d="M67.15,90V108L145.5,186.4V226.8L187.7,269V301.5L172.3,317H160" stroke-width="10.4" />
<path d="M119.6,90V128.7L166.6,175.7V217.7L213.2,264.3V311L185.8,338.4H160" stroke-width="10.4" />
<path d="M40,165.5H89L124.5,201V243.5L139.4,258.4V290" stroke-width="10.4" />
<g stroke="none" fill="#c83232"><rect x="133.3" y="281.8" width="12.4" height="24.8" rx="4"/><rect x="133.3" y="470.6" width="12.4" height="25.1" rx="4"/><rect x="112.8" y="281.8" width="12.4" height="24.8" rx="4"/><rect x="112.8" y="470.6" width="12.4" height="25.1" rx="4"/><rect x="92.3" y="281.8" width="12.4" height="24.8" rx="4"/><rect x="92.3" y="470.6" width="12.4" height="25.1" rx="4"/><rect x="71.8" y="281.8" width="12.4" height="24.8" rx="4"/><rect x="71.8" y="470.6" width="12.4" height="25.1" rx="4"/><rect x="51.3" y="281.8" width="12.4" height="24.8" rx="4"/><rect x="51.3" y="470.6" width="12.4" height="25.1" rx="4"/><rect x="30.8" y="281.8" width="12.4" height="24.8" rx="4"/><rect x="30.8" y="470.6" width="12.4" height="25.1" rx="4"/><rect x="149.4" y="455.0" width="24.8" height="12.6" rx="4"/><rect x="149.4" y="434.4" width="24.8" height="12.6" rx="4"/><rect x="149.4" y="413.9" width="24.8" height="12.6" rx="4"/><rect x="149.4" y="393.3" width="24.8" height="12.6" rx="4"/><rect x="149.4" y="372.8" width="24.8" height="12.6" rx="4"/><rect x="149.4" y="352.2" width="24.8" height="12.6" rx="4"/><rect x="149.4" y="331.7" width="24.8" height="12.6" rx="4"/><rect x="149.4" y="311.2" width="24.8" height="12.6" rx="4"/><path d="M40,323.1H125.2A9,9 0 0 1 134.2,332.1V433Q134.2,455.4 112,455.4H40Z"/><rect x="394.8" y="207.7" width="51.3" height="51.5" rx="3.5"/><rect x="480.8" y="207.7" width="51.5" height="51.5" rx="3.5"/><rect x="394.8" y="415.8" width="51.3" height="50.9" rx="3.5"/><rect x="480.8" y="415.8" width="51.5" height="50.9" rx="3.5"/><rect x="394.8" y="519.5" width="51.3" height="51.0" rx="3.5"/><rect x="480.8" y="519.5" width="51.5" height="51.0" rx="3.5"/><rect x="422.0" y="277.9" width="27.0" height="20.9" rx="3"/><rect x="477.9" y="277.9" width="27.0" height="20.9" rx="3"/><rect x="422.0" y="310.3" width="27.0" height="20.9" rx="3"/><rect x="477.9" y="310.3" width="27.0" height="20.9" rx="3"/><rect x="422.0" y="343.0" width="27.0" height="20.9" rx="3"/><rect x="477.9" y="343.0" width="27.0" height="20.9" rx="3"/><rect x="422.0" y="375.8" width="27.0" height="20.9" rx="3"/><rect x="477.9" y="375.8" width="27.0" height="20.9" rx="3"/><rect x="422.0" y="616.0" width="27.0" height="20.9" rx="3"/><rect x="477.9" y="616.0" width="27.0" height="20.9" rx="3"/><rect x="422.0" y="648.7" width="27.0" height="20.9" rx="3"/><rect x="477.9" y="648.7" width="27.0" height="20.9" rx="3"/><rect x="422.0" y="681.4" width="27.0" height="20.9" rx="3"/><rect x="477.9" y="681.4" width="27.0" height="20.9" rx="3"/><rect x="148.8" y="548.1" width="36.4" height="46.9" rx="11"/><rect x="220.6" y="548.1" width="37.6" height="46.9" rx="11"/><rect x="407.6" y="105.0" width="38.5" height="46.9" rx="11"/><rect x="480.8" y="105.0" width="37.5" height="46.9" rx="11"/><rect x="905.0" y="680.9" width="36.9" height="46.9" rx="11"/><rect x="978.2" y="680.9" width="36.4" height="46.9" rx="11"/><rect x="94.3" y="660.2" width="28.5" height="60.0" rx="1"/><rect x="40.0" y="660.2" width="41.6" height="60.0" rx="1"/><rect x="1041.5" y="536.5" width="62.5" height="14.4" rx="5.5"/><rect x="1041.5" y="556.9" width="62.5" height="14.4" rx="5.5"/><rect x="1041.5" y="577.4" width="62.5" height="14.4" rx="5.5"/><rect x="1041.5" y="597.8" width="62.5" height="14.4" rx="5.5"/><rect x="1041.5" y="618.2" width="62.5" height="14.4" rx="5.5"/><rect x="1041.5" y="638.6" width="62.5" height="14.4" rx="5.5"/><rect x="1041.5" y="659.1" width="62.5" height="14.4" rx="5.5"/><rect x="1041.5" y="679.5" width="62.5" height="14.4" rx="5.5"/><rect x="1041.5" y="699.9" width="62.5" height="14.4" rx="5.5"/><path d="M1147.3,430.2h14.5v56.2a6.2,6.2 0 0 1 -6.2,6.2h-2.1a6.2,6.2 0 0 1 -6.2,-6.2z"/><path d="M1167.9,430.2h14.5v56.2a6.2,6.2 0 0 1 -6.2,6.2h-2.1a6.2,6.2 0 0 1 -6.2,-6.2z"/><path d="M1188.4,430.2h14.5v56.2a6.2,6.2 0 0 1 -6.2,6.2h-2.1a6.2,6.2 0 0 1 -6.2,-6.2z"/><path d="M1209.0,430.2h14.5v56.2a6.2,6.2 0 0 1 -6.2,6.2h-2.1a6.2,6.2 0 0 1 -6.2,-6.2z"/><path d="M1229.5,430.2h14.5v56.2a6.2,6.2 0 0 1 -6.2,6.2h-2.1a6.2,6.2 0 0 1 -6.2,-6.2z"/><path d="M1250.1,430.2h14.5v56.2a6.2,6.2 0 0 1 -6.2,6.2h-2.1a6.2,6.2 0 0 1 -6.2,-6.2z"/><path d="M1270.6,430.2h14.5v56.2a6.2,6.2 0 0 1 -6.2,6.2h-2.1a6.2,6.2 0 0 1 -6.2,-6.2z"/><path d="M1291.2,430.2h14.5v56.2a6.2,6.2 0 0 1 -6.2,6.2h-2.1a6.2,6.2 0 0 1 -6.2,-6.2z"/></g>
<path d="M165,440.6H310.8M165,461.4H289.8M139.5,488.6H280.9" stroke-width="10.4" />
<path d="M165,378.7H218.5" stroke-width="10.4" />
<path d="M109.5,535.6L145.4,571.5H167" stroke-width="24.4" />
<path d="M30,477L84.5,531.5" stroke-width="14" />
<path d="M30,508L104,582" stroke-width="10.4" />
<path d="M40,561L108.5,642.5V670" stroke-width="10.4" />
<path d="M118,700.3H171" stroke-width="10.4" />
<path d="M880,722L900.5,701.8H915" stroke-width="12" />
<path d="M325,89.4L364,128.4H426" stroke-width="8.7" />
<path d="M723.4,90V712" stroke-width="8.7" />
<path d="M744.3,90V712" stroke-width="8.7" />
<path d="M765.2,90V712" stroke-width="8.7" />
<path d="M786.0,90V712" stroke-width="8.7" />
<path d="M806.9,90V712" stroke-width="8.7" />
<path d="M890.8,90L827.8,153.0V712" stroke-width="8.7" />
<path d="M917.1,90L848.7,158.4V712" stroke-width="8.7" />
<path d="M943.4,90L869.6,163.8V627.8L907.6,665.5H1050" stroke-width="8.7" />
<path d="M969.6,90L890.4,169.2V617.5L918.7,645.4H1050" stroke-width="8.7" />
<path d="M995.9,90L911.3,174.6V596.3L940.8,625.3H1050" stroke-width="8.7" />
<path d="M1022.2,90L932.2,180.0V512.1L966,545.4H1050" stroke-width="8.7" />
<path d="M1048.5,90L953.1,185.4V489.3L973.5,509.2" stroke-width="8.7" />
<path d="M1074.8,90L974.0,190.8V446.7L984.4,456.5" stroke-width="8.7" />
<path d="M984.4,456.5L1047.3,519.6H1105.2L1119.3,533.7V551L1107.7,562.6H1050" stroke-width="8.7" />
<path d="M942.6,576.6L950.4,584.4H1050" stroke-width="8.7" />
<path d="M1043.7,378.2H1141.3L1162.6,399.5H1178L1195.8,417.3V440" stroke-width="10.4" />
<path d="M1109.5,446.5L1124.3,461.3H1152" stroke-width="12.9" />
<path d="M1182.4,358.6V377L1215,409.6V440" stroke-width="8.8" />
<path d="M1208.6,311.5V326.5L1223.5,341.4V396.4L1235.8,408.7V440" stroke-width="8.8" />
<path d="M1244.5,274.6V390L1257.6,403.1V440" stroke-width="8.8" />
<path d="M1281.6,238.5V288.5L1265.8,304.3V382.5L1277.7,394.4V440" stroke-width="8.8" />
<path d="M1318.5,202.3V243L1302.7,258.8V294L1286.5,310.2V378.4L1298.5,390.4V440" stroke-width="8.8" />
<path d="M1171.4,581V520L1178.7,512.7" stroke-width="16.5" />
<path d="M1174.6,485V510" stroke-width="13" />
<path d="M1320,649.5H1172" stroke-width="52.7" stroke-linecap="butt"/>
<path stroke="none" fill="#c83232" d="M1173,623.1H1158.5L1121.5,652L1119.5,658V710H1171.6V676Z"/>
<circle stroke="none" fill="#c83232" cx="1145.3" cy="686.4" r="26.3"/></g>
<g opacity="0.706" fill="#32c832" stroke="none"><path fill-rule="evenodd" d="M54.4,76.8 L80.6,76.8 L99.1,95.3 L99.1,121.5 L80.6,140.0 L54.4,140.0 L35.9,121.5 L35.9,95.3ZM46.9,108.2a20.6,20.6 0 1,0 41.2,0a20.6,20.6 0 1,0 -41.2,0Z"/><path fill-rule="evenodd" d="M158.5,76.8 L184.7,76.8 L203.2,95.3 L203.2,121.5 L184.7,140.0 L158.5,140.0 L140.0,121.5 L140.0,95.3ZM151.0,108.2a20.6,20.6 0 1,0 41.2,0a20.6,20.6 0 1,0 -41.2,0Z"/><path fill-rule="evenodd" d="M148.2,720V677.9A22.85,22.85 0 0 1 193.9,677.9V720ZM158.8,702.6a12.5,12.5 0 1,0 25.0,0a12.5,12.5 0 1,0 -25.0,0Z"/></g>
<g opacity="0.706" fill="#ffff00" stroke="none"><path fill-rule="evenodd" d="M314.5,155.8 L330.7,155.8 L342.1,167.2 L342.1,183.4 L330.7,194.8 L314.5,194.8 L303.1,183.4 L303.1,167.2ZM315.1,175.3a7.5,7.5 0 1,0 15.0,0a7.5,7.5 0 1,0 -15.0,0Z"/><path fill-rule="evenodd" d="M69.5,223.9 L85.7,223.9 L97.1,235.3 L97.1,251.5 L85.7,262.9 L69.5,262.9 L58.1,251.5 L58.1,235.3ZM70.1,243.4a7.5,7.5 0 1,0 15.0,0a7.5,7.5 0 1,0 -15.0,0Z"/><path fill-rule="evenodd" d="M210.4,358.8 L226.6,358.8 L238.0,370.2 L238.0,386.4 L226.6,397.8 L210.4,397.8 L199.0,386.4 L199.0,370.2ZM211.0,378.3a7.5,7.5 0 1,0 15.0,0a7.5,7.5 0 1,0 -15.0,0Z"/><path fill-rule="evenodd" d="M101.4,516.1 L117.6,516.1 L129.0,527.5 L129.0,543.7 L117.6,555.1 L101.4,555.1 L90.0,543.7 L90.0,527.5ZM102.0,535.6a7.5,7.5 0 1,0 15.0,0a7.5,7.5 0 1,0 -15.0,0Z"/><path fill-rule="evenodd" d="M648.4,551.8 L664.6,551.8 L676.0,563.2 L676.0,579.4 L664.6,590.8 L648.4,590.8 L637.0,579.4 L637.0,563.2ZM649.0,571.3a7.5,7.5 0 1,0 15.0,0a7.5,7.5 0 1,0 -15.0,0Z"/><path fill-rule="evenodd" d="M1106.5,275.9 L1122.7,275.9 L1134.1,287.3 L1134.1,303.5 L1122.7,314.9 L1106.5,314.9 L1095.1,303.5 L1095.1,287.3ZM1107.1,295.4a7.5,7.5 0 1,0 15.0,0a7.5,7.5 0 1,0 -15.0,0Z"/><path fill-rule="evenodd" d="M1035.6,358.7 L1051.8,358.7 L1063.2,370.1 L1063.2,386.3 L1051.8,397.7 L1035.6,397.7 L1024.2,386.3 L1024.2,370.1ZM1036.2,378.2a7.5,7.5 0 1,0 15.0,0a7.5,7.5 0 1,0 -15.0,0Z"/><path fill-rule="evenodd" d="M976.3,437.0 L992.5,437.0 L1003.9,448.4 L1003.9,464.6 L992.5,476.0 L976.3,476.0 L964.9,464.6 L964.9,448.4ZM976.9,456.5a7.5,7.5 0 1,0 15.0,0a7.5,7.5 0 1,0 -15.0,0Z"/><path fill-rule="evenodd" d="M965.4,489.7 L981.6,489.7 L993.0,501.1 L993.0,517.3 L981.6,528.7 L965.4,528.7 L954.0,517.3 L954.0,501.1ZM966.0,509.2a7.5,7.5 0 1,0 15.0,0a7.5,7.5 0 1,0 -15.0,0Z"/><path fill-rule="evenodd" d="M934.5,557.1 L950.7,557.1 L962.1,568.5 L962.1,584.7 L950.7,596.1 L934.5,596.1 L923.1,584.7 L923.1,568.5ZM935.1,576.6a7.5,7.5 0 1,0 15.0,0a7.5,7.5 0 1,0 -15.0,0Z"/><path fill-rule="evenodd" d="M1310.4,182.8 L1326.6,182.8 L1338.0,194.2 L1338.0,210.4 L1326.6,221.8 L1310.4,221.8 L1299.0,210.4 L1299.0,194.2ZM1311.0,202.3a7.5,7.5 0 1,0 15.0,0a7.5,7.5 0 1,0 -15.0,0Z"/><path fill-rule="evenodd" d="M1273.5,219.0 L1289.7,219.0 L1301.1,230.4 L1301.1,246.6 L1289.7,258.0 L1273.5,258.0 L1262.1,246.6 L1262.1,230.4ZM1274.1,238.5a7.5,7.5 0 1,0 15.0,0a7.5,7.5 0 1,0 -15.0,0Z"/><path fill-rule="evenodd" d="M1236.4,255.1 L1252.6,255.1 L1264.0,266.5 L1264.0,282.7 L1252.6,294.1 L1236.4,294.1 L1225.0,282.7 L1225.0,266.5ZM1237.0,274.6a7.5,7.5 0 1,0 15.0,0a7.5,7.5 0 1,0 -15.0,0Z"/><path fill-rule="evenodd" d="M1200.5,292.0 L1216.7,292.0 L1228.1,303.4 L1228.1,319.6 L1216.7,331.0 L1200.5,331.0 L1189.1,319.6 L1189.1,303.4ZM1201.1,311.5a7.5,7.5 0 1,0 15.0,0a7.5,7.5 0 1,0 -15.0,0Z"/><path fill-rule="evenodd" d="M1174.3,339.1 L1190.5,339.1 L1201.9,350.5 L1201.9,366.7 L1190.5,378.1 L1174.3,378.1 L1162.9,366.7 L1162.9,350.5ZM1174.9,358.6a7.5,7.5 0 1,0 15.0,0a7.5,7.5 0 1,0 -15.0,0Z"/><path fill-rule="evenodd" d="M1101.4,427.0 L1117.6,427.0 L1129.0,438.4 L1129.0,454.6 L1117.6,466.0 L1101.4,466.0 L1090.0,454.6 L1090.0,438.4ZM1102.0,446.5a7.5,7.5 0 1,0 15.0,0a7.5,7.5 0 1,0 -15.0,0Z"/><path fill-rule="evenodd" d="M1163.2,561.5 L1179.4,561.5 L1190.8,572.9 L1190.8,589.1 L1179.4,600.5 L1163.2,600.5 L1151.8,589.1 L1151.8,572.9ZM1163.8,581.0a7.5,7.5 0 1,0 15.0,0a7.5,7.5 0 1,0 -15.0,0Z"/><path fill-rule="evenodd" d="M1137.2,666.9 L1153.4,666.9 L1164.8,678.3 L1164.8,694.5 L1153.4,705.9 L1137.2,705.9 L1125.8,694.5 L1125.8,678.3ZM1137.8,686.4a7.5,7.5 0 1,0 15.0,0a7.5,7.5 0 1,0 -15.0,0Z"/></g>
<g opacity="0.706" fill="none" stroke="#c8c8c8" stroke-linecap="round" stroke-linejoin="round"><path d="M30,160H93.7L119.7,134V90M119.7,134L145.7,160H197.7L223.7,134V90" stroke-width="6.3" />
<rect x="140.6" y="207.6" width="83" height="134.3" rx="8.5" stroke-width="6.3" fill="none"/>
<path d="M149.2,288.2H168.6V307M149.4,489.6H168.4V471.4" stroke-width="4.5" stroke-linecap="butt"/>
<path d="M330.5,206.2V253.8H361.5" stroke-width="8.9" />
<path d="M290.8,413.5H322.5M306.7,413.5V462.9M344.7,413.5L376.7,462.9M376.7,413.5L344.7,462.9" stroke-width="8.9" />
<path d="M290.4,566V517.2H314L323.6,526.8V541L314.5,550.3H290.4M309,550.3L322.2,566M344.5,517.4L376.3,566M376.3,517.4L344.5,566" stroke-width="8.9" />
<path d="M291,104.9L277.6,118.8L295.2,135.8H328M302.2,95V135.8" stroke-width="7.6" />
<path d="M311.7,139.5H353.3M332.5,118.7V160.3" stroke-width="1" stroke-linecap="butt"/>
<path d="M265.5,467.4H307.1M286.3,446.59999999999997V488.2" stroke-width="1" stroke-linecap="butt"/>
<path d="M265.2,571.5H306.8M286,550.7V592.3" stroke-width="1" stroke-linecap="butt"/>
<path stroke="none" fill="#c8c8c8" d="M451,204.7h12.3v7.4h-12.3zM451,227.1h12.3v12.8h-12.3zM451,253.8h12.3v7.3h-12.3z"/>
<path stroke="none" fill="#c8c8c8" d="M451,412.7h12.3v7.4h-12.3zM451,435.1h12.3v12.8h-12.3zM451,461.8h12.3v7.3h-12.3z"/>
<path stroke="none" fill="#c8c8c8" d="M451,516.4h12.3v7.4h-12.3zM451,538.8h12.3v12.8h-12.3zM451,565.5h12.3v7.3h-12.3z"/>
<path stroke="none" fill="#c8c8c8" d="M557,100H1310V108.7H557Q553,108.7 552,104Z"/>
<path d="M1117.6,98V134L1086,111M1142,98V134M1181.5,98V134M1150,121L1168,104" stroke-width="8.5" />
<path d="M30,608.6H215A86,86 0 0 1 301,694V712" stroke-width="6.8" />
<path d="M30,628.5H215A65.5,65.5 0 0 1 280.5,694V712" stroke-width="2.6" />
<path d="M133.1,667.8V712" stroke-width="9.9" />
<path d="M1320,502.5H1143.5L1113.6,532.4V712" stroke-width="10.8" />
<circle cx="1154" cy="543" r="9.6" stroke-width="10.8" fill="none"/>
<path d="M1270,698.9V712M1304,699.5V712" stroke-width="8" /></g>
<g opacity="0.706" fill="none" stroke="#fff" stroke-width="1"><path d="M168.4,274.3H196.4M182.4,260.3V288.3"/><path d="M36.4,389.6H98.4M67.4,358.6V420.6"/><path d="M446.1,128.4H481.1M463.6,111.7V145.1"/><path d="M359.8,201.5H401.8M380.8,180.5V222.5"/><path d="M435.0,233.3H492.0M463.5,204.3V262.3"/><path d="M431.0,441.4H495.8M463.4,409.0V473.8"/><path d="M431.0,545.1H495.8M463.4,512.7V577.5"/><path d="M445.3,337.3H481.3M463.3,319.3V355.3"/><path d="M446.6,675.4H480.6M463.6,658.4V692.4"/><path d="M186.3,571.5H220.3M203.3,555.1V587.9"/><path d="M38.4,701.6H96.4M67.4,672.6V730.6"/><path d="M942.7,704.3H976.7M959.7,693.3V715.3"/></g>
</svg></div>
<div id="vscroll" class="abs"></div><div id="vthumb" class="abs"></div>
<div id="hscroll" class="abs"></div><div id="hthumb" class="abs"></div>
<svg class="abs" style="left:0;top:0;z-index:4" width="1317" height="744" viewBox="0 0 1317 744">
<path d="M1302.2,91.7h7.2l-3.6,4z" fill="#4a4a4a"/>
<rect x="1303" y="105" width="14" height="13" fill="#f3f1ee"/><path d="M1306,114.2h7.6l-3.8,-4.6z" fill="#4a4a4a"/>
<rect x="1303" y="688" width="14" height="14" fill="#f5f3f1"/><path d="M1306,692.6h7.8l-3.9,4.6z" fill="#555"/>
<rect x="56" y="702" width="14" height="14" fill="#f5f3f1"/><path d="M65.2,705.2v7.6l-4.6,-3.8z" fill="#555"/>
<rect x="1289.5" y="702" width="13.5" height="14" fill="#f5f3f1"/><path d="M1293.8,705.2v7.6l4.6,-3.8z" fill="#555"/>
<path d="M15.3,725.8l3.5,4.8l-3.5,4.8l-3.5,-4.8z" fill="#111"/>
<circle cx="1286" cy="729.8" r="7.8" fill="#14f014" stroke="#127a12" stroke-width="0.9"/><path d="M1280.6,726.4A6.4,6.4 0 0 1 1288.6,723.8Q1283.6,726.6 1281.6,731.4Q1280,729 1280.6,726.4Z" fill="#6cf86c"/>
<path d="M1305.4,722.4h5.4l-1.2,10h-3zM1306,734.2h4.2v3.4h-4.2z" fill="#000"/>
</svg>
<div id="status" class="abs"><span class="t">Left-click to select object to get info for</span><!--STATUS--></div>
<div id="notif" class="abs"><div class="h">GIFRecorder</div><div class="b" style="top:32px">Recording duration set to 40 seconds. Recording will</div><div class="b" style="top:48px">start in 10 seconds.</div></div>
</div></body></html>
